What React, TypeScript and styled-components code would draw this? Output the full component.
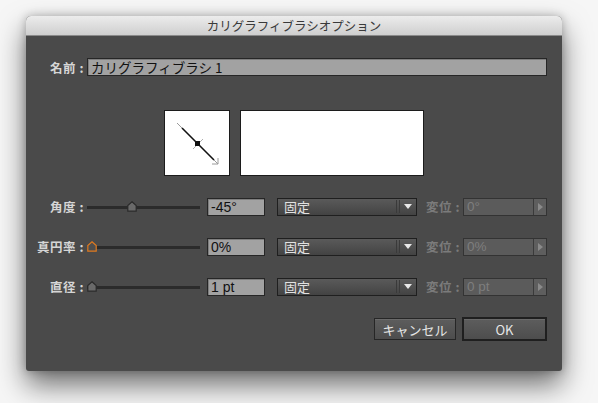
import React from "react";
import styled, { createGlobalStyle } from "styled-components";

const Global = createGlobalStyle`
  html, body { margin: 0; padding: 0; }
  body {
    background: #f6f6f6;
    font-family: "Liberation Sans", "Noto Sans CJK JP", sans-serif;
    width: 598px; height: 403px; overflow: hidden;
  }
`;

const Page = styled.div`
  padding: 16px 0 0 26px;
`;

const Window = styled.div`
  width: 536px;
  height: 355px;
  border-radius: 5px 5px 3px 3px;
  background: #4a4a4a;
  box-shadow: 0 14px 28px rgba(0,0,0,0.55), 0 0 10px rgba(0,0,0,0.25);
  display: flex;
  flex-direction: column;
  overflow: hidden;
`;

const TitleBar = styled.div`
  height: 20px;
  flex: 0 0 20px;
  background: linear-gradient(#ececec, #cfcfcf);
  border-bottom: 1px solid #8a8a8a;
  box-sizing: border-box;
  display: flex;
  align-items: center;
  justify-content: center;
  font-size: 12.5px;
  color: #3a3a3a;
  font-family: "Noto Sans CJK JP", sans-serif;
`;

const Body = styled.div`
  flex: 1;
  display: flex;
  flex-direction: column;
  padding: 22px 15px 0 0;
`;

const Label = styled.div<{ $w?: number; $dim?: boolean }>`
  width: ${(p) => p.$w ?? 58}px;
  flex: 0 0 ${(p) => p.$w ?? 58}px;
  text-align: right;
  font-size: 12.5px;
  font-weight: bold;
  color: ${(p) => (p.$dim ? "#7b7b7b" : "#d6d6d6")};
  font-family: "Noto Sans CJK JP", sans-serif;
  white-space: nowrap;
  letter-spacing: 0.5px;
`;

const NameRow = styled.div`
  display: flex;
  align-items: center;
  height: 18px;
`;

const TextField = styled.div<{ $w?: number }>`
  margin-left: 3px;
  ${(p) => (p.$w ? `width: ${p.$w}px; flex: 0 0 ${p.$w}px;` : "flex: 1;")}
  height: 18px;
  box-sizing: border-box;
  background: #a2a2a2;
  border: 1px solid #262626;
  box-shadow: inset 1px 1px 0 #7e7e7e;
  font-size: 13.5px;
  color: #111;
  padding-left: 3px;
  display: flex;
  align-items: center;
  font-family: "Noto Sans CJK JP", sans-serif;
  white-space: nowrap;
  overflow: hidden;
`;

const PreviewRow = styled.div`
  display: flex;
  justify-content: center;
  gap: 10px;
  margin-top: 34px;
  padding-left: 15px;
`;

const PreviewBox = styled.div<{ $w: number }>`
  width: ${(p) => p.$w}px;
  height: 66px;
  box-sizing: border-box;
  background: #fff;
  border: 1px solid #1c1c1c;
  display: flex;
  align-items: center;
  justify-content: center;
`;

const Rows = styled.div`
  display: flex;
  flex-direction: column;
  gap: 23px;
  margin-top: 22px;
`;

const Row = styled.div`
  display: flex;
  align-items: center;
  height: 17px;
`;

const Slider = styled.div`
  position: relative;
  margin-left: 3px;
  width: 113px;
  flex: 0 0 113px;
  height: 17px;
`;

const Track = styled.div`
  position: absolute;
  left: 0;
  right: 0;
  top: 8px;
  height: 3px;
  background: #2b2b2b;
`;

const Thumb = styled.svg<{ $pos: number }>`
  position: absolute;
  top: 3px;
  left: ${(p) => p.$pos}px;
`;

const ValueField = styled(TextField)`
  margin-left: 7px;
  font-family: "Liberation Sans", "Noto Sans CJK JP", sans-serif;
  font-size: 14px;
`;

const Dropdown = styled.div`
  margin-left: 12px;
  width: 140px;
  flex: 0 0 140px;
  height: 18px;
  box-sizing: border-box;
  border: 1px solid #1f1f1f;
  background: linear-gradient(#5a5a5a, #434343);
  display: flex;
  align-items: center;
  font-size: 13px;
  color: #e2e2e2;
  font-family: "Noto Sans CJK JP", sans-serif;
`;

const DropText = styled.span`
  flex: 1;
  padding-left: 6px;
`;

const DropSep = styled.span`
  width: 2px;
  height: 13px;
  border-left: 1px solid #3a3a3a;
  border-right: 1px solid #3a3a3a;
  margin-right: 4px;
`;

const DropArrow = styled.span`
  width: 0;
  height: 0;
  border-left: 4px solid transparent;
  border-right: 4px solid transparent;
  border-top: 5px solid #e8e8e8;
  margin-right: 4px;
`;

const DisabledField = styled.div`
  margin-left: 3px;
  width: 84px;
  flex: 0 0 84px;
  height: 18px;
  box-sizing: border-box;
  border: 1px solid #333;
  background: #5b5b5b;
  display: flex;
  align-items: stretch;
  font-size: 13.5px;
  color: #7e7e7e;
`;

const DisabledText = styled.span`
  flex: 1;
  padding-left: 3px;
  display: flex;
  align-items: center;
`;

const StepBtn = styled.span`
  width: 12px;
  border-left: 1px solid #3a3a3a;
  background: #5e5e5e;
  display: flex;
  align-items: center;
  justify-content: center;
  &::after {
    content: "";
    border-top: 4px solid transparent;
    border-bottom: 4px solid transparent;
    border-left: 5px solid #8a8a8a;
  }
`;

const ButtonRow = styled.div`
  display: flex;
  justify-content: flex-end;
  gap: 6px;
  margin-top: 22px;
`;

const Button = styled.div<{ $primary?: boolean; $w: number }>`
  width: ${(p) => p.$w}px;
  height: ${(p) => (p.$primary ? 24 : 22)}px;
  margin-top: ${(p) => (p.$primary ? 0 : 1)}px;
  box-sizing: border-box;
  border: ${(p) => (p.$primary ? "2px solid #1f1f1f" : "1px solid #262626")};
  background: linear-gradient(#5d5d5d, #4d4d4d);
  box-shadow: inset 0 1px 0 #6a6a6a;
  display: flex;
  align-items: center;
  justify-content: center;
  font-size: 13px;
  color: #e6e6e6;
  font-family: "Noto Sans CJK JP", sans-serif;
`;

const ThumbIcon = ({ pos, active }: { pos: number; active?: boolean }) => (
  <Thumb $pos={pos} width="10" height="11" viewBox="0 0 10 11">
    <path
      d="M5 0.8 L9.2 4.5 L9.2 10.2 L0.8 10.2 L0.8 4.5 Z"
      fill={active ? "#4e4e4e" : "#6a6a6a"}
      stroke={active ? "#e07a1f" : "#2a2a2a"}
      strokeWidth="1.2"
    />
  </Thumb>
);

const BrushIcon = () => (
  <svg width="64" height="64" viewBox="0 0 64 64">
    <line x1="12" y1="12" x2="17" y2="17" stroke="#9a9a9a" strokeWidth="1" />
    <line x1="17" y1="17" x2="49" y2="49" stroke="#111" strokeWidth="1.6" />
    <line x1="49" y1="49" x2="53" y2="53" stroke="#9a9a9a" strokeWidth="1" />
    <polyline points="47,53 53,53 53,47" fill="none" stroke="#9a9a9a" strokeWidth="1" />
    <line x1="28" y1="38" x2="38" y2="28" stroke="#b0b0b0" strokeWidth="1" />
    <rect x="30" y="30" width="5" height="5" fill="#111" />
  </svg>
);

const rows = [
  { label: "角度 :", value: "-45°", thumb: 40, active: false, vary: "0°" },
  { label: "真円率 :", value: "0%", thumb: 0, active: true, vary: "0%" },
  { label: "直径 :", value: "1 pt", thumb: 0, active: false, vary: "0 pt" },
];

export default function App() {
  return (
    <>
      <Global />
      <Page>
        <Window>
          <TitleBar>カリグラフィブラシオプション</TitleBar>
          <Body>
            <NameRow>
              <Label>名前 :</Label>
              <TextField>カリグラフィブラシ 1</TextField>
            </NameRow>
            <PreviewRow>
              <PreviewBox $w={66}>
                <BrushIcon />
              </PreviewBox>
              <PreviewBox $w={184} />
            </PreviewRow>
            <Rows>
              {rows.map((r) => (
                <Row key={r.label}>
                  <Label>{r.label}</Label>
                  <Slider>
                    <Track />
                    <ThumbIcon pos={r.thumb} active={r.active} />
                  </Slider>
                  <ValueField $w={58}>{r.value}</ValueField>
                  <Dropdown>
                    <DropText>固定</DropText>
                    <DropSep />
                    <DropArrow />
                  </Dropdown>
                  <Label $w={43} $dim>
                    変位 :
                  </Label>
                  <DisabledField>
                    <DisabledText>{r.vary}</DisabledText>
                    <StepBtn />
                  </DisabledField>
                </Row>
              ))}
            </Rows>
            <ButtonRow>
              <Button $w={82}>キャンセル</Button>
              <Button $w={85} $primary>
                OK
              </Button>
            </ButtonRow>
          </Body>
        </Window>
      </Page>
    </>
  );
}
